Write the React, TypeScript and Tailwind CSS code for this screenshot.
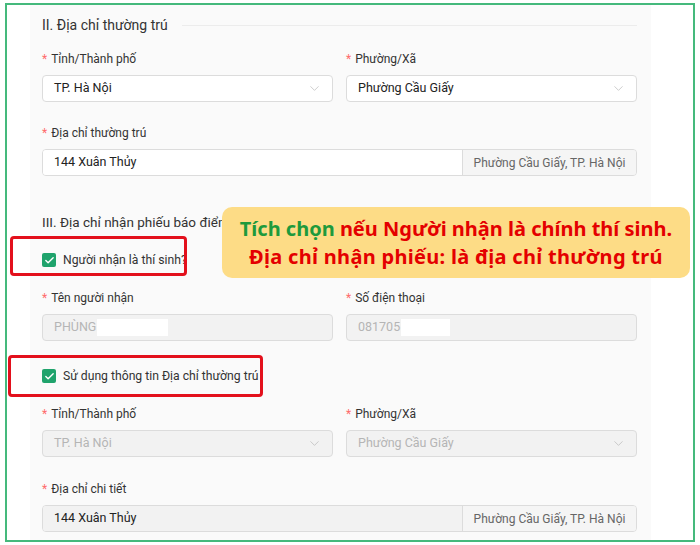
import { ChevronDown, Check } from "lucide-react";

const font = { fontFamily: 'Roboto, "Liberation Sans", sans-serif' };

const Label = ({ text }: { text: string }) => (
  <div className="h-[20px] leading-[20px] text-[12px] text-[#333] flex items-center">
    <span className="text-[#ff6b6b] mr-[4px] text-[12px]">*</span>
    {text}
  </div>
);

const Select = ({ value, disabled }: { value: string; disabled?: boolean }) => (
  <div
    className={`h-[27px] mt-[6px] rounded-[4px] border border-[#dcdcdc] flex items-center justify-between pl-[11px] pr-[10px] text-[12.5px] ${
      disabled ? "bg-[#f2f2f2] text-[#b5b5b5]" : "bg-white text-[#222]"
    }`}
  >
    <span>{value}</span>
    <ChevronDown size={15} strokeWidth={1} className="text-[#b0b0b0]" />
  </div>
);

const AddonInput = ({ value, disabled }: { value: string; disabled?: boolean }) => (
  <div className="h-[27px] mt-[6px] rounded-[4px] border border-[#dcdcdc] flex text-[12.5px] overflow-hidden">
    <div className={`flex-1 flex items-center pl-[11px] text-[#222] ${disabled ? "bg-[#f2f2f2]" : "bg-white"}`}>
      {value}
    </div>
    <div className="w-[174px] border-l border-[#dcdcdc] bg-[#f5f5f5] flex items-center justify-center text-[#666] whitespace-nowrap text-[12px]">
      Phường Cầu Giấy, TP. Hà Nội
    </div>
  </div>
);

const Masked = ({ value, blank }: { value: string; blank: number }) => (
  <div className="h-[27px] mt-[6px] rounded-[4px] border border-[#dcdcdc] bg-[#f2f2f2] flex items-center pl-[11px] text-[12.5px] text-[#b5b5b5]">
    <span>{value}</span>
    <span className="inline-block h-[17px] bg-white ml-[1px]" style={{ width: blank }} />
  </div>
);

const CheckRow = ({ text }: { text: string }) => (
  <div className="h-[20px] flex items-center gap-[7px] text-[12.2px] text-[#333]">
    <span className="w-[14px] h-[14px] rounded-[2px] bg-[#1fa36c] flex items-center justify-center">
      <Check size={11} strokeWidth={3} className="text-white" />
    </span>
    {text}
  </div>
);

export default function App() {
  return (
    <div className="w-[700px] h-[545px] bg-white relative overflow-hidden" style={font}>
      <div className="ml-[5px] mt-[3px] w-[690px] h-[539px] border-2 border-[#45b97c] pl-[23px] pr-[42px]">
        <div className="h-full bg-[#fafafa] pl-[12px] pr-[14px] pt-[10px]">
          <div className="h-[20px] flex items-center gap-[14px]">
            <span className="text-[14px] text-[#333]">II. Địa chỉ thường trú</span>
            <div className="flex-1 h-px bg-[#ececec]" />
          </div>

          <div className="grid grid-cols-2 gap-x-[13px] mt-[14px]">
            <div>
              <Label text="Tỉnh/Thành phố" />
              <Select value="TP. Hà Nội" />
            </div>
            <div>
              <Label text="Phường/Xã" />
              <Select value="Phường Cầu Giấy" />
            </div>
          </div>

          <div className="mt-[21px]">
            <Label text="Địa chỉ thường trú" />
            <AddonInput value="144 Xuân Thủy" />
          </div>

          <div className="mt-[36px] h-[20px] leading-[20px] text-[13.5px] text-[#333]">
            III. Địa chỉ nhận phiếu báo điểm
          </div>

          <div className="mt-[18px]">
            <CheckRow text="Người nhận là thí sinh?" />
          </div>

          <div className="grid grid-cols-2 gap-x-[13px] mt-[18px]">
            <div>
              <Label text="Tên người nhận" />
              <Masked value="PHÙNG" blank={71} />
            </div>
            <div>
              <Label text="Số điện thoại" />
              <Masked value="081705" blank={49} />
            </div>
          </div>

          <div className="mt-[25px]">
            <CheckRow text="Sử dụng thông tin Địa chỉ thường trú" />
          </div>

          <div className="grid grid-cols-2 gap-x-[13px] mt-[18px]">
            <div>
              <Label text="Tỉnh/Thành phố" />
              <Select value="TP. Hà Nội" disabled />
            </div>
            <div>
              <Label text="Phường/Xã" />
              <Select value="Phường Cầu Giấy" disabled />
            </div>
          </div>

          <div className="mt-[22px]">
            <Label text="Địa chỉ chi tiết" />
            <AddonInput value="144 Xuân Thủy" disabled />
          </div>
        </div>
      </div>

      {/* annotations */}
      <div className="absolute left-[10px] top-[236px] w-[177px] h-[40px] border-[3px] border-[#e3101c] rounded-[4px]" />
      <div className="absolute left-[8px] top-[355px] w-[255px] h-[42px] border-[3px] border-[#e3101c] rounded-[4px]" />
      <div
        className="absolute left-[222px] top-[207px] w-[468px] h-[71px] bg-[#fddc86] rounded-[10px] flex flex-col items-center justify-center text-[20px] font-bold leading-[28px]"
        style={{ fontFamily: '"Noto Sans", "DejaVu Sans", sans-serif' }}
      >
        <div>
          <span className="text-[#1e9a3c]">Tích chọn</span>{" "}
          <span className="text-[#e40000]">nếu Người nhận là chính thí sinh.</span>
        </div>
        <div className="text-[#e40000] tracking-[0.3px]">Địa chỉ nhận phiếu: là địa chỉ thường trú</div>
      </div>
    </div>
  );
}
